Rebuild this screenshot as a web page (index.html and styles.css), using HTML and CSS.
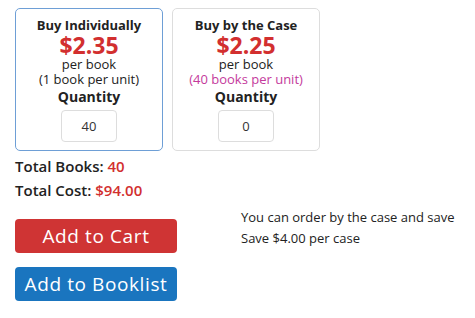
FILE: index.html
```html
<!DOCTYPE html>
<html lang="en">
<head>
    <meta charset="UTF-8">
    <meta name="viewport" content="width=device-width, initial-scale=1.0">
    <title>Book Order</title>
    <link rel="stylesheet" href="styles.css">
</head>
<body>
    <!-- Pricing options -->
    <div class="options">
        <div class="option selected">
            <h3>Buy Individually</h3>
            <div class="price">$2.35</div>
            <div class="unit">per book</div>
            <div class="per-unit">(1 book per unit)</div>
            <div class="qty-label">Quantity</div>
            <input type="text" class="qty" value="40">
        </div>
        <div class="option">
            <h3>Buy by the Case</h3>
            <div class="price">$2.25</div>
            <div class="unit">per book</div>
            <div class="per-unit case">(40 books per unit)</div>
            <div class="qty-label">Quantity</div>
            <input type="text" class="qty" value="0">
        </div>
    </div>

    <!-- Totals and actions -->
    <div class="order">
        <div class="order-left">
            <div class="total">Total Books: <span class="red">40</span></div>
            <div class="total">Total Cost: <span class="red">$94.00</span></div>
            <button type="button" class="cart-button">Add to Cart</button>
            <button type="button" class="list-button">Add to Booklist</button>
        </div>
        <div class="savings">
            <p>You can order by the case and save</p>
            <p>Save $4.00 per case</p>
        </div>
    </div>
</body>
</html>
```

FILE: styles.css
```css
* { margin: 0; padding: 0; box-sizing: border-box; }
body { font-family: "Open Sans", "Liberation Sans", sans-serif; color: #222; background-color: #fff; padding: 8px 15px; }
.options { display: flex; gap: 9px; }
.option { width: 148px; height: 143px; border: 1px solid #ddd; border-radius: 5px; text-align: center; padding-top: 8px; }
.option.selected { border-color: #6e9fd6; }
.option h3 { font-size: 13px; font-weight: 700; line-height: 16px; }
.price { font-size: 23px; font-weight: 700; color: #d22f2f; line-height: 24px; }
.unit, .per-unit { font-size: 13px; line-height: 15px; }
.per-unit.case { color: #c43a9c; }
.qty-label { font-size: 14px; font-weight: 700; line-height: 18px; margin-top: 1px; }
.qty { width: 56px; height: 32px; margin-top: 4px; border: 1px solid #ddd; border-radius: 4px; text-align: center; font-family: inherit; font-size: 13px; color: #333; }
.order { display: flex; margin-top: 3px; }
.order-left { width: 162px; }
.total { font-size: 15px; font-weight: 600; line-height: 24px; }
.red { color: #d22f2f; }
button { display: block; width: 162px; height: 34px; border: none; border-radius: 4px; color: #fff; font-family: inherit; font-size: 19px; letter-spacing: 0.6px; cursor: pointer; }
.cart-button { background-color: #cf3434; margin-top: 17px; }
.list-button { background-color: #1a75bf; margin-top: 14px; }
.savings { margin-left: 64px; padding-top: 53px; font-size: 13px; line-height: 21px; }
```
